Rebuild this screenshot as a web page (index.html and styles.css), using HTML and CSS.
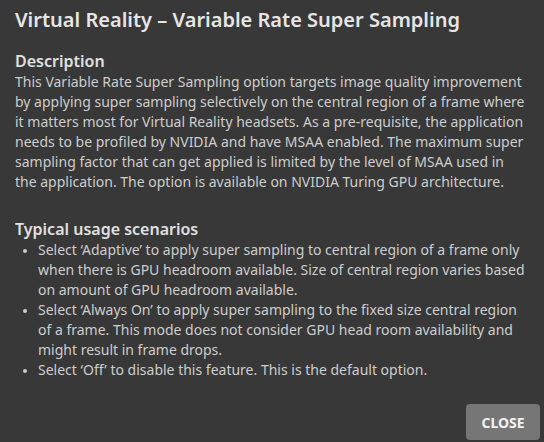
FILE: index.html
```html
<!DOCTYPE html>
<html>
<head>
<meta charset="utf-8">
<link rel="stylesheet" href="styles.css">
</head>
<body>
<div class="dialog">
  <h1 class="title">Virtual Reality – Variable Rate Super Sampling</h1>
  <h2 class="section-title">Description</h2>
  <p class="text">This Variable Rate Super Sampling option targets image quality improvement by applying super sampling selectively on the central region of a frame where it matters most for Virtual Reality headsets. As a pre-requisite, the application needs to be profiled by NVIDIA and have MSAA enabled. The maximum super sampling factor that can get applied is limited by the level of MSAA used in the application. The option is available on NVIDIA Turing GPU architecture.</p>
  <h2 class="section-title usage">Typical usage scenarios</h2>
  <ul class="list">
    <li>Select ‘Adaptive’ to apply super sampling to central region of a frame only when there is GPU headroom available. Size of central region varies based on amount of GPU headroom available.</li>
    <li>Select ‘Always On’ to apply super sampling to the fixed size central region of a frame. This mode does not consider GPU head room availability and might result in frame drops.</li>
    <li>Select ‘Off’ to disable this feature. This is the default option.</li>
  </ul>
  <div class="actions">
    <button class="btn">CLOSE</button>
  </div>
</div>
</body>
</html>
```
FILE: styles.css
```css
html, body {
  margin: 0;
  padding: 0;
  background: #383838;
}
body {
  width: 544px;
  height: 442px;
  overflow: hidden;
  font-family: "Noto Sans", "Liberation Sans", sans-serif;
  color: #cdcdcd;
}
.dialog {
  padding: 6px 15px 0 15px;
}
.title {
  margin: 0;
  font-size: 20px;
  font-weight: 600;
  color: #e6e6e6;
  line-height: 28px;
}
.section-title {
  margin: 16px 0 0 0;
  font-size: 16px;
  font-weight: 600;
  color: #e0e0e0;
  line-height: 22px;
}
.section-title.usage {
  margin-top: 26px;
}
.text {
  margin: 0;
  font-size: 14px;
  line-height: 20px;
}
.list {
  margin: 0;
  padding: 0 0 0 23px;
  font-size: 14px;
  line-height: 20px;
}
.list li::marker {
  font-size: 11px;
}
.actions {
  display: flex;
  justify-content: flex-end;
  margin-top: 24px;
  margin-right: -11px;
}
.btn {
  background: #767676;
  color: #f2f2f2;
  border: none;
  border-radius: 4px;
  width: 74px;
  height: 36px;
  font-family: "Noto Sans", "Liberation Sans", sans-serif;
  font-size: 14px;
  font-weight: 700;
}
```
